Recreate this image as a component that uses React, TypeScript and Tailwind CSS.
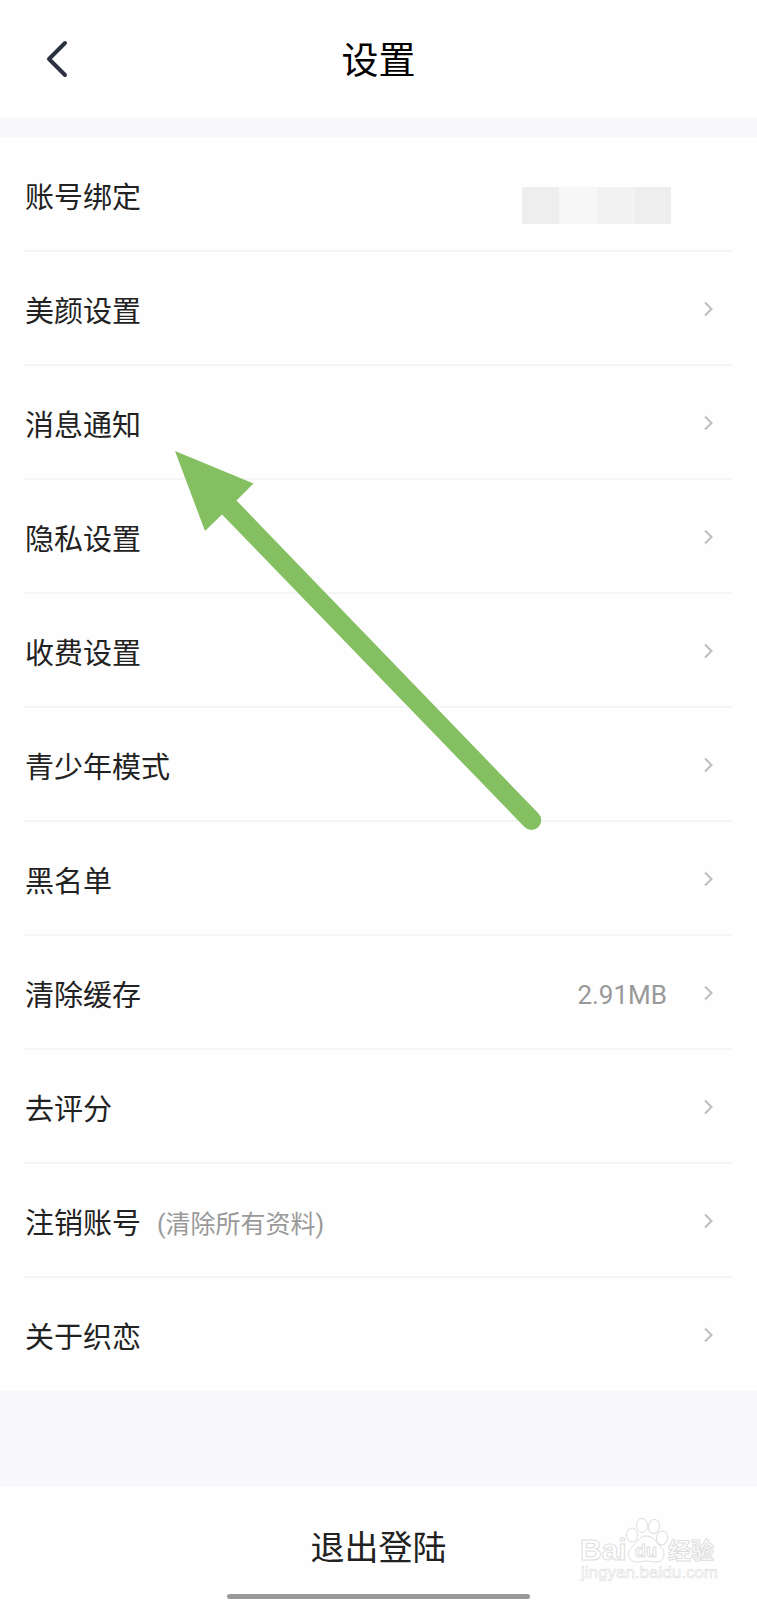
import type { ReactNode } from 'react';

type Item = {
  label: string;
  note?: string;
  value?: ReactNode;
  noArrow?: boolean;
};

const items: Item[] = [
  { label: '账号绑定', value: <HiddenAccount />, noArrow: true },
  { label: '美颜设置' },
  { label: '消息通知' },
  { label: '隐私设置' },
  { label: '收费设置' },
  { label: '青少年模式' },
  { label: '黑名单' },
  { label: '清除缓存', value: '2.91MB' },
  { label: '去评分' },
  { label: '注销账号', note: '(清除所有资料)' },
  { label: '关于织恋' },
];

function HiddenAccount() {
  return (
    <span className="mt-4 flex h-[37px]">
      <span className="w-[37px] bg-[#eeeeee]" />
      <span className="w-[38px] bg-[#f7f7f7]" />
      <span className="w-[38px] bg-[#f2f2f2]" />
      <span className="w-[36px] bg-[#eeeeee]" />
    </span>
  );
}

function Chevron() {
  return (
    <svg viewBox="0 0 10 16" className="h-4 w-[10px]" fill="none" stroke="#bdbdbd" strokeWidth="2" aria-hidden="true">
      <path d="M2 1.5 8.5 8 2 14.5" />
    </svg>
  );
}

function SettingRow({ label, note, value, noArrow }: Item) {
  return (
    <li className="border-b-2 border-[#f6f6f6] last:border-b last:border-transparent">
      <button type="button" className="flex h-28 w-full items-center pt-0.5 pr-5 pl-px text-left">
        <span className="pt-2 text-[29px] text-[#222222]">{label}</span>
        {note && <span className="ml-4 pt-2 text-[25px] text-[#999999]">{note}</span>}
        <span className="ml-auto flex items-center gap-9">
          {value && <span className="pt-1 text-[26px] text-[#999999]">{value}</span>}
          {noArrow ? <span className="w-1.5" /> : <Chevron />}
        </span>
      </button>
    </li>
  );
}

// green pointer drawn over the list
function Pointer() {
  return (
    <svg
      viewBox="0 0 368 382"
      className="pointer-events-none absolute left-[175px] top-[314px] h-[382px] w-[368px]"
      aria-hidden="true"
    >
      <path d="M0 0 78.5 32.5 61.5 49.5 363.5 362.5A9.7 9.7 0 0 1 349.5 376L47 63.5 30 80Z" fill="#84bf61" />
    </svg>
  );
}

function Watermark() {
  return (
    <svg
      viewBox="0 0 140 70"
      className="pointer-events-none absolute right-[39px] bottom-[14px] h-[70px] w-[140px]"
      fill="#fff"
      stroke="#dedede"
      strokeWidth="1"
      fontFamily='"Liberation Sans", "Noto Sans CJK SC", sans-serif'
    >
      <text x="2" y="44" fontSize="30" fontWeight="700">Bai</text>
      <ellipse cx="54" cy="19" rx="5.5" ry="7" />
      <ellipse cx="64" cy="9.5" rx="5.5" ry="7" />
      <ellipse cx="76" cy="10.5" rx="5.5" ry="7" transform="rotate(10 76 10.5)" />
      <ellipse cx="84" cy="22" rx="5.5" ry="7" transform="rotate(15 84 22)" />
      <path d="M68 20C61 20 59 27 54 31 47 37 51 46 59 46 63 46 65 45 68 45 72 45 75 46 78 46 87 46 88 36 83 31 78 27 76 20 68 20Z" />
      <text x="57" y="41" fontSize="18" fontWeight="700">du</text>
      <text x="90" y="43" fontSize="23" fontWeight="700">经验</text>
      <text x="3" y="62" fontSize="17" strokeWidth="0.6">jingyan.baidu.com</text>
    </svg>
  );
}

export default function App() {
  return (
    <div className="flex min-h-screen flex-col bg-[#f9f9fb] font-[Roboto,'Noto_Sans_CJK_SC',sans-serif]">
      <header className="grid h-[117px] grid-cols-[1fr_auto_1fr] items-center bg-white px-11">
        <button type="button" aria-label="返回" className="justify-self-start">
          <svg viewBox="0 0 26 40" className="h-10 w-[26px]" fill="none" stroke="#2b3140" strokeWidth="4" strokeLinecap="round" strokeLinejoin="round">
            <path d="M21 4 5 20 21 36" />
          </svg>
        </button>
        <h1 className="pt-1.5 text-[37px] text-black">设置</h1>
      </header>

      <main className="relative mt-5 bg-[#fefefe]">
        <ul className="px-6 pt-px">
          {items.map((item) => (
            <SettingRow key={item.label} {...item} />
          ))}
        </ul>
        <Pointer />
      </main>

      <footer className="relative mt-24 flex flex-1 flex-col items-center bg-[#fefefe]">
        <button type="button" className="w-full pt-9 pb-5 text-[34px] leading-[50px] text-[#222222]">
          退出登陆
        </button>
        <div className="mt-auto mb-px h-[5px] w-2/5 rounded-full bg-[#999999]" />
        <Watermark />
      </footer>
    </div>
  );
}
